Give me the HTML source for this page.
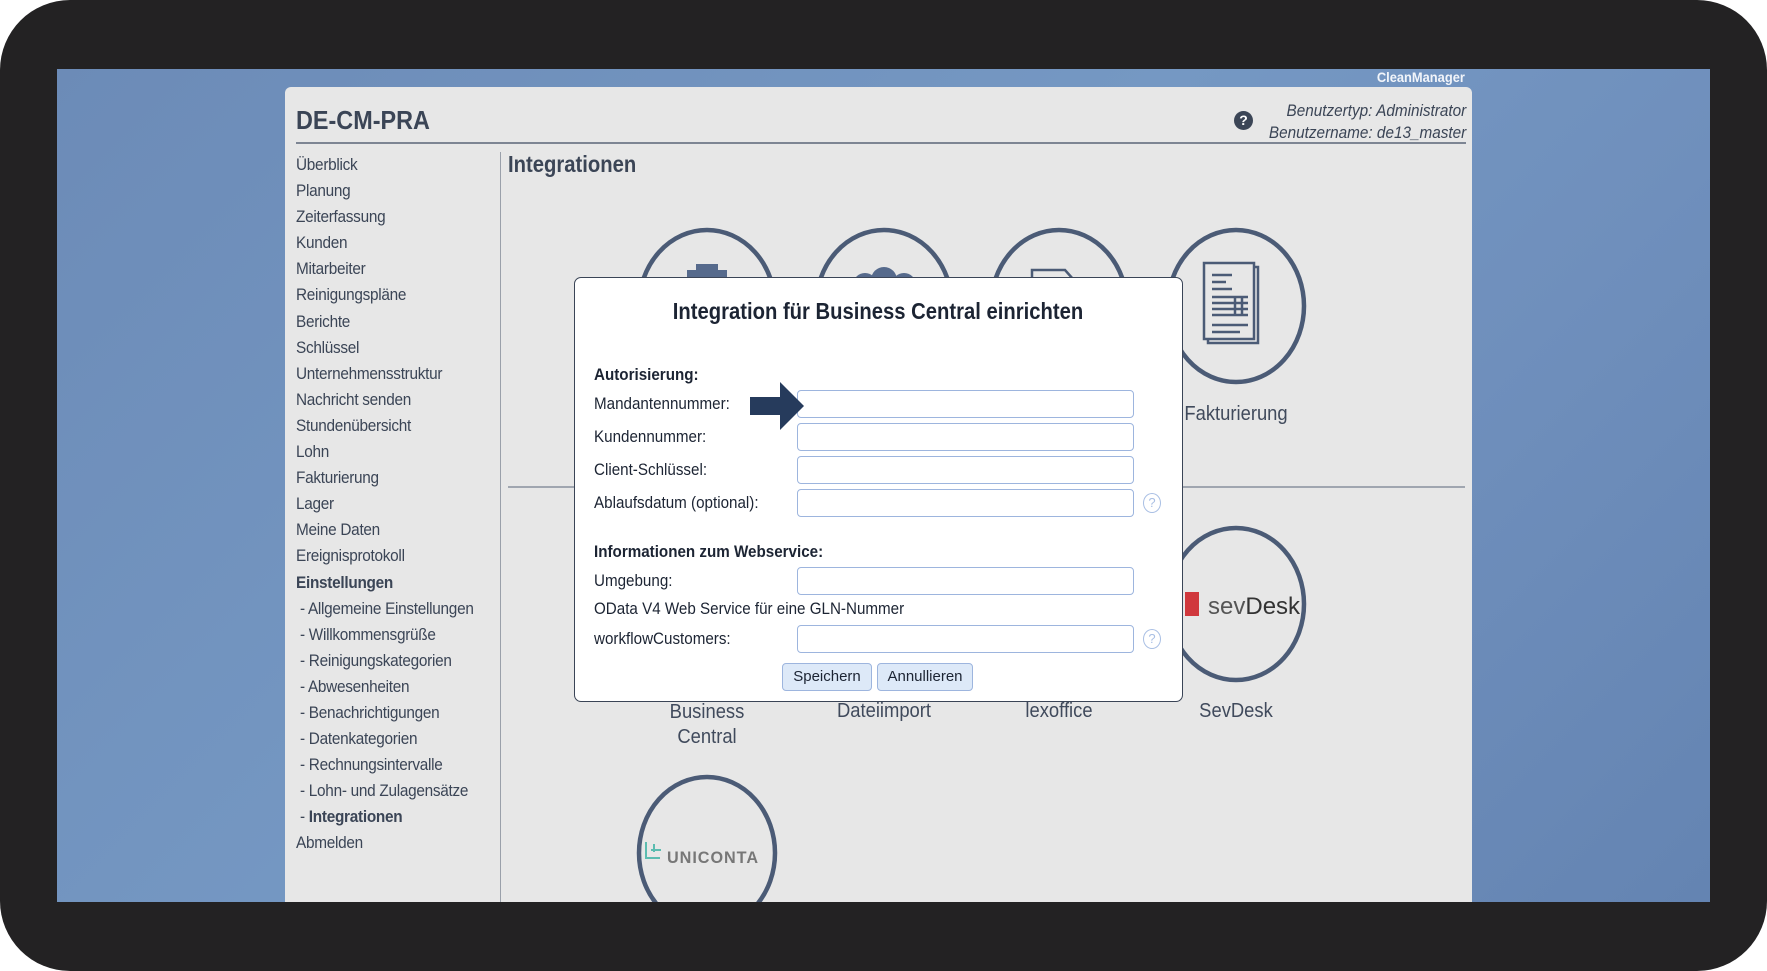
<!DOCTYPE html>
<html><head><meta charset="utf-8"><style>
*{margin:0;padding:0;box-sizing:border-box}
body{width:1767px;height:971px;background:#fff;position:relative;overflow:hidden;font-family:"Liberation Sans",sans-serif}
.bezel{position:absolute;left:0;top:0;width:1767px;height:971px;background:#232223;border-radius:70px}
.screen{position:absolute;left:57px;top:69px;width:1653px;height:833px;background:linear-gradient(135deg,#6c8bb7 0%,#7598c3 45%,#6f8fbc 70%,#6484b2 100%);overflow:hidden}
.abs{position:absolute;white-space:nowrap}
.panel{position:absolute;left:285px;top:87px;width:1187px;height:815px;background:#e7e7e7;border-radius:6px 6px 0 0;overflow:hidden}
.nav{font-size:16.5px;color:#3b4556;letter-spacing:-0.3px;transform:scaleX(.93);transform-origin:left}
.lbl{font-size:20px;color:#404a5c;transform:scaleX(.92);transform-origin:center;text-align:center;width:200px}
.dlg{position:absolute;left:574px;top:277px;width:609px;height:425px;background:#fff;border:1.5px solid #3a4456;border-radius:7px}
.f{font-size:16.5px;color:#1c2433;transform:scaleX(.92);transform-origin:left}
.inp{position:absolute;left:222px;width:337px;height:28px;border:1.5px solid #9db5de;border-radius:4px;background:#fff}
.q{position:absolute;left:568px;width:18px;height:20px;border:1.5px solid #a9bfe4;border-radius:50%;color:#a9bfe4;font-size:13px;text-align:center;line-height:17px}
.btn{position:absolute;top:385px;height:28px;border:1.5px solid #9db5de;border-radius:4px;background:#dde9f8;font-size:15px;color:#1c2433;text-align:center;line-height:25px}
</style></head><body>
<div class="bezel"></div>
<div class="screen">
 <div class="abs" style="left:1316px;top:0;font-size:14px;font-weight:bold;color:#f2f5fa;transform:scaleX(.92)">CleanManager</div>
</div>
<div class="panel">
 <div class="abs" style="left:11px;top:18px;font-size:26px;font-weight:bold;color:#3b4556;transform:scaleX(.9);transform-origin:left">DE-CM-PRA</div>
 <div class="abs" style="left:949px;top:24px;width:19px;height:19px;border-radius:50%;background:#3b4556;color:#fff;font-size:14px;font-weight:bold;text-align:center;line-height:19px">?</div>
 <div class="abs" style="right:6px;top:13px;font-size:17px;font-style:italic;color:#3b4556;text-align:right;line-height:22px;transform:scaleX(.9);transform-origin:right">Benutzertyp: Administrator<br>Benutzername: de13_master</div>
 <div class="abs" style="left:11px;top:55px;width:1170px;height:2px;background:#7d8593"></div>
 <div class="abs" style="left:215px;top:65px;width:1px;height:800px;background:#9aa0aa"></div>
 <div class="abs nav" style="left:11px;top:65px;line-height:26.1px">Überblick<br>Planung<br>Zeiterfassung<br>Kunden<br>Mitarbeiter<br>Reinigungspläne<br>Berichte<br>Schlüssel<br>Unternehmensstruktur<br>Nachricht senden<br>Stundenübersicht<br>Lohn<br>Fakturierung<br>Lager<br>Meine Daten<br>Ereignisprotokoll<br><b>Einstellungen</b><br>&nbsp;- Allgemeine Einstellungen<br>&nbsp;- Willkommensgrüße<br>&nbsp;- Reinigungskategorien<br>&nbsp;- Abwesenheiten<br>&nbsp;- Benachrichtigungen<br>&nbsp;- Datenkategorien<br>&nbsp;- Rechnungsintervalle<br>&nbsp;- Lohn- und Zulagensätze<br>&nbsp;- <b>Integrationen</b><br>Abmelden</div>
 <div class="abs" style="left:223px;top:64px;font-size:23px;font-weight:bold;color:#3b4556;transform:scaleX(.88);transform-origin:left">Integrationen</div>
 <div class="abs" style="left:223px;top:399px;width:957px;height:1.5px;background:#a0a6b0"></div>
 <svg class="abs" style="left:0;top:0" width="1187" height="840">
  <g fill="none" stroke="#4b5b76" stroke-width="4.5">
   <ellipse cx="422" cy="219" rx="68" ry="76"/><ellipse cx="599" cy="219" rx="68" ry="76"/><ellipse cx="774" cy="219" rx="68" ry="76"/><ellipse cx="951" cy="219" rx="68" ry="76"/>
   <ellipse cx="951" cy="517" rx="68" ry="76"/><ellipse cx="422" cy="766" rx="68" ry="76"/>
  </g>
  <g fill="#566a8c">
   <rect x="402" y="183" width="40" height="20"/><rect x="411" y="177" width="22" height="8"/>
   <circle cx="580" cy="198" r="12"/><circle cx="599" cy="193" r="13"/><circle cx="619" cy="198" r="12"/>
  </g>
  <path d="M747 200v-17h33l8 9v8" fill="none" stroke="#4b5b76" stroke-width="2.5"/>
  <g fill="none" stroke="#4b5b76" stroke-width="2.5">
   <rect x="923" y="180" width="50" height="76"/><rect x="919" y="176" width="50" height="76" fill="#e7e7e7"/>
   <path d="M927 188h20M927 195h14M927 202h20M927 210h36M927 216h36M927 222h36M927 228h36M927 238h36M927 245h28M950 210v18M957 210v18"/>
  </g>
  <rect x="900" y="505" width="14" height="24" fill="#d0383d"/>
  <text x="923" y="527" font-size="24" fill="#555" font-family="Liberation Sans">sev<tspan fill="#333">Desk</tspan></text>
  <path d="M361 755v16h14M366 763h10M369 757v8" stroke="#5bbcb0" stroke-width="2" fill="none"/>
  <text x="382" y="776" font-size="17" font-weight="bold" fill="#777" font-family="Liberation Sans" letter-spacing="1" textLength="92" lengthAdjust="spacingAndGlyphs">UNICONTA</text>
 </svg>
 <div class="abs lbl" style="left:851px;top:316px">Fakturierung</div>
 <div class="abs lbl" style="left:322px;top:613px;line-height:25px">Business<br>Central</div>
 <div class="abs lbl" style="left:499px;top:613px">Dateiimport</div>
 <div class="abs lbl" style="left:674px;top:613px">lexoffice</div>
 <div class="abs lbl" style="left:851px;top:613px">SevDesk</div>
</div>
<div class="dlg">
 <div class="abs" style="left:0;width:606px;top:20px;text-align:center;font-size:23px;font-weight:bold;color:#1c2433;transform:scaleX(.88)">Integration für Business Central einrichten</div>
 <div class="abs f" style="left:19px;top:88px;font-weight:bold">Autorisierung:</div>
 <div class="abs f" style="left:19px;top:117px">Mandantennummer:</div>
 <div class="inp" style="top:112px"></div>
 <div class="abs f" style="left:19px;top:150px">Kundennummer:</div>
 <div class="inp" style="top:145px"></div>
 <div class="abs f" style="left:19px;top:183px">Client-Schlüssel:</div>
 <div class="inp" style="top:178px"></div>
 <div class="abs f" style="left:19px;top:216px">Ablaufsdatum (optional):</div>
 <div class="inp" style="top:211px"></div>
 <div class="q" style="top:215px">?</div>
 <div class="abs f" style="left:19px;top:265px;font-weight:bold">Informationen zum Webservice:</div>
 <div class="abs f" style="left:19px;top:294px">Umgebung:</div>
 <div class="inp" style="top:289px"></div>
 <div class="abs f" style="left:19px;top:322px">OData V4 Web Service für eine GLN-Nummer</div>
 <div class="abs f" style="left:19px;top:352px">workflowCustomers:</div>
 <div class="inp" style="top:347px"></div>
 <div class="q" style="top:351px">?</div>
 <div class="btn" style="left:207px;width:90px">Speichern</div>
 <div class="btn" style="left:302px;width:96px">Annullieren</div>
 <svg class="abs" style="left:174px;top:103px" width="58" height="50"><path d="M1 16h30V1l24 24-24 24V34H1z" fill="#263b5c"/></svg>
</div>
</body></html>
